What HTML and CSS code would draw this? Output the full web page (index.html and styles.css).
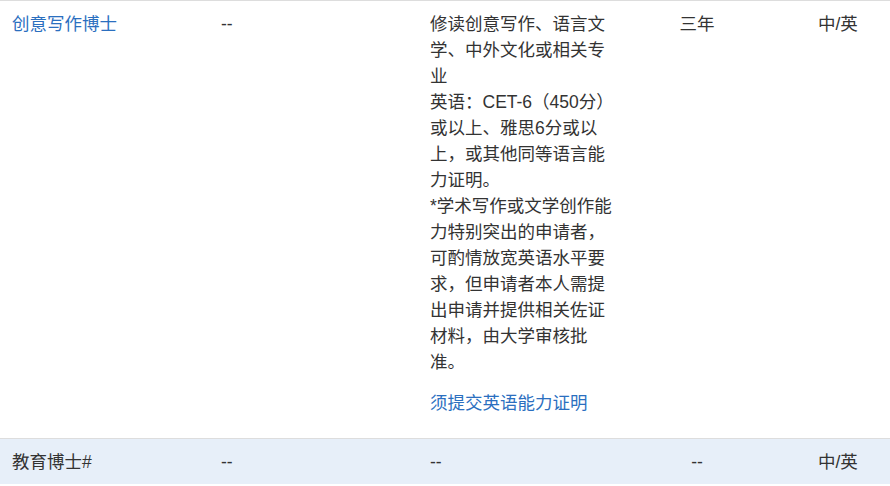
FILE: index.html
```html
<!DOCTYPE html>
<html lang="zh-CN">
<head>
<meta charset="UTF-8">
<meta name="viewport" content="width=device-width, initial-scale=1.0">
<title>博士课程</title>
<link rel="stylesheet" href="styles.css">
</head>
<body>
<table class="program-table">
  <colgroup>
    <col class="col-name">
    <col class="col-mid">
    <col class="col-req">
    <col class="col-years">
    <col class="col-lang">
  </colgroup>
  <tbody>
    <tr>
      <td><a href="#" class="link">创意写作博士</a></td>
      <td>--</td>
      <td>
        <div class="req">修读创意写作、语言文学、中外文化或相关专业<br>英语：CET-6（450分）或以上、雅思6分或以上，或其他同等语言能力证明。<br>*学术写作或文学创作能力特别突出的申请者，可酌情放宽英语水平要求，但申请者本人需提出申请并提供相关佐证材料，由大学审核批准。</div>
        <p class="note"><a href="#" class="link">须提交英语能力证明</a></p>
      </td>
      <td class="center">三年</td>
      <td class="lang">中/英</td>
    </tr>
    <tr class="alt">
      <td>教育博士#</td>
      <td>--</td>
      <td>--</td>
      <td class="center">--</td>
      <td class="lang">中/英</td>
    </tr>
  </tbody>
</table>
</body>
</html>
```

FILE: styles.css
```css
body {
  margin: 0;
  background-color: #fff;
  font-family: "Liberation Sans", "Noto Sans CJK SC", sans-serif;
  font-size: 17.5px;
  color: #333;
}
.program-table {
  width: 890px;
  border-collapse: collapse;
  table-layout: fixed;
  border-top: 1px solid #dddddd;
}
.col-name, .col-mid, .col-req {
  width: 209px;
}
.col-years {
  width: 140px;
}
.program-table td {
  vertical-align: top;
  padding: 10px 12px;
  line-height: 26px;
  text-align: left;
}
.program-table tr + tr td {
  border-top: 1px solid #dddddd;
}
.program-table td.center {
  text-align: center;
}
.program-table td.lang {
  padding-left: 51px;
  padding-right: 0;
}
.alt td {
  background-color: #e7eff9;
  padding-bottom: 9px;
}
.link {
  color: #2b6fbf;
  text-decoration: none;
}
.note {
  margin: 15px 0 12px;
}
```
